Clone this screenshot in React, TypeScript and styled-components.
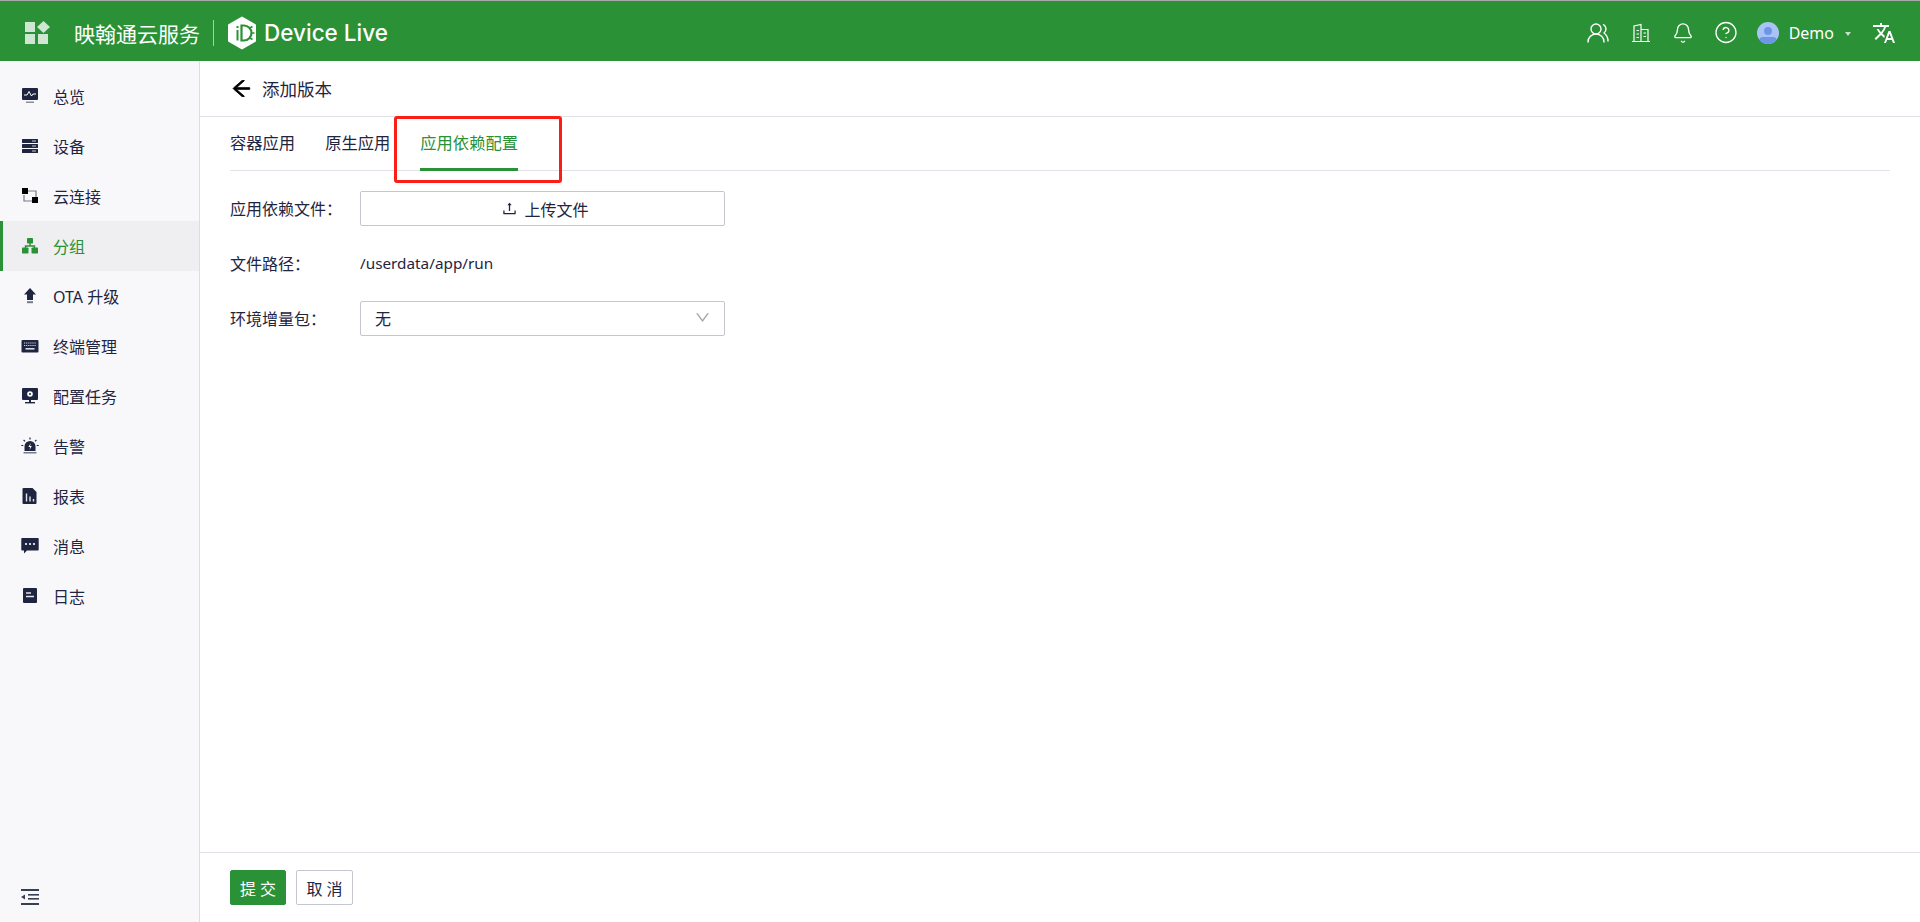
import React from "react";
import styled, { createGlobalStyle } from "styled-components";
import { Bell, CircleHelp, UsersRound } from "lucide-react";
import { AiOutlineArrowLeft, AiOutlineDown, AiOutlineUpload } from "react-icons/ai";
import { MdTranslate } from "react-icons/md";

const GREEN = "#2a9136";
const INK = "#1f2540";
const LINE = "#e0e2ea";

const GlobalStyle = createGlobalStyle`
  html, body {
    margin: 0;
    padding: 0;
    height: 100%;
    overflow: hidden;
  }
  body {
    font-family: "Noto Sans", "Noto Sans CJK SC", sans-serif;
    color: ${INK};
    background: #fff;
  }
`;

const Page = styled.div`
  position: relative;
  display: flex;
  flex-direction: column;
  height: 922px;
`;

const Header = styled.header`
  flex: none;
  box-sizing: border-box;
  height: 61px;
  display: flex;
  align-items: center;
  background: ${GREEN};
  border-top: 1px solid #a9a9a9;
  color: #fff;
  padding: 3px 24px 0 25px;
  z-index: 1;
`;

const AppTitle = styled.span`
  margin-left: 24px;
  font-size: 21px;
  white-space: nowrap;
`;

const Divider = styled.span`
  width: 1px;
  height: 26px;
  margin: 0 13px;
  background: #a8d0ad;
`;

const ProductName = styled.span`
  margin-left: 7px;
  font-family: Inter, sans-serif;
  font-size: 22.5px;
  font-weight: 500;
  white-space: nowrap;
`;

const HeaderRight = styled.div`
  margin-left: auto;
  display: flex;
  align-items: center;
`;

const HeaderIcon = styled.span`
  width: 24px;
  height: 24px;
  display: flex;
  align-items: center;
  justify-content: center;
  margin-right: 18.6px;
`;

const UserName = styled.span`
  margin-left: 10px;
  font-size: 16px;
`;

const Caret = styled.span`
  margin: 2px 21px 0 11px;
  border-style: solid;
  border-width: 4px 3.5px 0;
  border-color: #c8e0cb transparent transparent;
`;

const Body = styled.div`
  flex: 1;
  min-height: 0;
  display: flex;
`;

const Sidebar = styled.aside`
  flex: none;
  box-sizing: border-box;
  width: 200px;
  display: flex;
  flex-direction: column;
  padding-top: 10px;
  background: #f8f8fb;
  border-right: 1px solid #dcdde4;
`;

const NavItem = styled.div<{ $active?: boolean }>`
  height: 50px;
  display: flex;
  align-items: center;
  gap: 14px;
  padding-left: 21px;
  font-size: 16px;
  color: ${(p) => (p.$active ? GREEN : INK)};
  background: ${(p) => (p.$active ? "#efeff1" : "transparent")};
  box-shadow: ${(p) => (p.$active ? `inset 3px 0 0 ${GREEN}` : "none")};
`;

const Collapse = styled.div`
  margin-top: auto;
  padding: 0 0 17px 21px;
  line-height: 0;
`;

const Main = styled.main`
  flex: 1;
  min-width: 0;
  display: flex;
  flex-direction: column;
`;

const TitleBar = styled.div`
  flex: none;
  box-sizing: border-box;
  height: 56px;
  display: flex;
  align-items: center;
  gap: 9px;
  padding-left: 30px;
  border-bottom: 1px solid ${LINE};
  font-size: 17.5px;
`;

const Content = styled.div`
  flex: 1;
  padding: 0 30px;
`;

const Tabs = styled.div`
  height: 54px;
  box-sizing: border-box;
  display: flex;
  gap: 30px;
  border-bottom: 1px solid ${LINE};
`;

const Tab = styled.div<{ $active?: boolean }>`
  height: 54px;
  box-sizing: border-box;
  padding-top: 13px;
  font-size: 16.3px;
  color: ${(p) => (p.$active ? GREEN : INK)};
  border-bottom: 3px solid ${(p) => (p.$active ? GREEN : "transparent")};
`;

const Form = styled.div`
  display: flex;
  flex-direction: column;
  gap: 20px;
  padding-top: 20px;
`;

const Row = styled.div`
  height: 35px;
  display: flex;
  align-items: center;
  font-size: 16px;
`;

const Label = styled.label`
  flex: none;
  width: 130px;
  padding-bottom: 2px;
`;

const Value = styled.span`
  font-size: 15.3px;
  padding-bottom: 2px;
`;

const UploadButton = styled.div`
  box-sizing: border-box;
  width: 365px;
  height: 35px;
  display: flex;
  align-items: center;
  justify-content: center;
  gap: 6px;
  padding-left: 5px;
  border: 1px solid #c4c6d0;
  border-radius: 2px;
`;

const Select = styled.div`
  box-sizing: border-box;
  width: 365px;
  height: 35px;
  display: flex;
  align-items: center;
  justify-content: space-between;
  padding: 0 13px 2px 14px;
  border: 1px solid #c4c6d0;
  border-radius: 2px;
`;

const Footer = styled.div`
  flex: none;
  box-sizing: border-box;
  height: 70px;
  display: flex;
  gap: 10px;
  padding: 17px 30px 0;
  border-top: 1px solid ${LINE};
`;

const Button = styled.button<{ $primary?: boolean }>`
  box-sizing: border-box;
  width: ${(p) => (p.$primary ? 56 : 57)}px;
  height: 35px;
  padding: 0;
  font-family: inherit;
  font-size: 16px;
  border-radius: 2px;
  border: 1px solid ${(p) => (p.$primary ? GREEN : "#c4c6d0")};
  background: ${(p) => (p.$primary ? GREEN : "#fff")};
  color: ${(p) => (p.$primary ? "#fff" : INK)};
`;

// the red box somebody drew over the screenshot
const Annotation = styled.div`
  position: absolute;
  left: 394px;
  top: 116px;
  width: 168px;
  height: 67px;
  box-sizing: border-box;
  border: 3px solid #fa1e16;
  border-radius: 3px;
  pointer-events: none;
`;

const Glyph = ({ children }: { children: React.ReactNode }) => (
  <svg width="18" height="18" viewBox="0 0 18 18" style={{ flex: "none" }}>
    {children}
  </svg>
);

const icons: Record<string, React.ReactNode> = {
  overview: (
    <>
      <rect x="1" y="1" width="16" height="12" rx="1" fill={INK} />
      <polyline points="3,8 6,8 8,4.5 10.5,9 12,7 15,7" fill="none" stroke="#fff" strokeWidth="1" />
      <rect x="5" y="14.5" width="8" height="1.5" fill="#8b8d9c" />
    </>
  ),
  device: (
    <>
      <rect x="1" y="2" width="16" height="4" rx="0.5" fill={INK} />
      <rect x="1" y="7" width="16" height="4" rx="0.5" fill={INK} />
      <rect x="1" y="12" width="16" height="4" rx="0.5" fill={INK} />
      <rect x="11" y="3.5" width="4" height="1" fill="#c8c9d2" />
      <rect x="11" y="8.5" width="4" height="1" fill="#c8c9d2" />
      <rect x="11" y="13.5" width="4" height="1" fill="#c8c9d2" />
    </>
  ),
  cloud: (
    <>
      <path d="M7 4h8v6M11 14H3V8" fill="none" stroke="#77798a" strokeWidth="1.2" />
      <rect x="1" y="1" width="6" height="6" fill="#000" />
      <rect x="11" y="10" width="6" height="6" fill="#000" />
    </>
  ),
  group: (
    <>
      <path d="M9 6v3M4.5 11V9h9v2" fill="none" stroke={GREEN} strokeWidth="1.4" />
      <rect x="6" y="1" width="6" height="5.5" rx="0.8" fill={GREEN} />
      <rect x="1" y="10.5" width="6.5" height="6" rx="0.8" fill={GREEN} />
      <rect x="10.5" y="10.5" width="6.5" height="6" rx="0.8" fill={GREEN} />
    </>
  ),
  ota: (
    <>
      <polygon points="9,1 15,7.5 12,7.5 12,13 6,13 6,7.5 3,7.5" fill={INK} />
      <rect x="6" y="14.2" width="6" height="2" fill="#77798a" />
    </>
  ),
  terminal: (
    <>
      <rect x="0.5" y="3" width="17" height="12.5" rx="1" fill={INK} />
      <path d="M3 6h12M3 8.5h12" stroke="#d9dae0" strokeWidth="1.2" strokeDasharray="1.2 .9" />
      <rect x="4.5" y="11" width="9" height="1.6" fill="#d9dae0" />
    </>
  ),
  config: (
    <>
      <rect x="1" y="1" width="16" height="12" rx="1" fill={INK} />
      <circle cx="9" cy="7" r="2.8" fill="#fff" />
      <circle cx="9" cy="7" r="1" fill={INK} />
      <rect x="8" y="13" width="2" height="2" fill={INK} />
      <rect x="4" y="15" width="10" height="1.4" fill={INK} />
    </>
  ),
  alarm: (
    <>
      <path d="M3.5 14V9.5a5.5 5.5 0 0 1 11 0V14z" fill={INK} />
      <path d="M9.8 6 7.4 10h1.8l-.7 3 2.3-4H9z" fill="#fff" />
      <rect x="2.5" y="15" width="13" height="1.5" fill="#77798a" />
      <path d="M9 .5v2M2.6 3l1.4 1.4M15.4 3 14 4.4M.3 8.5h2M15.7 8.5h2" stroke={INK} strokeWidth="1.2" />
    </>
  ),
  report: (
    <>
      <path d="M2.5 1h9l4 4v11a1 1 0 0 1-1 1h-12a1 1 0 0 1-1-1V2a1 1 0 0 1 1-1z" fill={INK} />
      <path d="M5.5 6.5v8M9 9.5v5M12.5 12v2.5" stroke="#e3e4ea" strokeWidth="1.4" />
    </>
  ),
  message: (
    <>
      <path d="M1 1h16a.7.7 0 0 1 .7.7v11a.7.7 0 0 1-.7.7H6l-3 3v-3H1a.7.7 0 0 1-.7-.7v-11A.7.7 0 0 1 1 1z" fill={INK} />
      <circle cx="5" cy="7" r="1.1" fill="#fff" />
      <circle cx="9" cy="7" r="1.1" fill="#fff" />
      <circle cx="13" cy="7" r="1.1" fill="#fff" />
    </>
  ),
  log: (
    <>
      <rect x="2" y="1" width="14" height="15" rx="1" fill={INK} />
      <path d="M5 6h5M5 9.5h8" stroke="#e3e4ea" strokeWidth="1.5" />
    </>
  ),
};

const navItems = [
  { key: "overview", label: "总览" },
  { key: "device", label: "设备" },
  { key: "cloud", label: "云连接" },
  { key: "group", label: "分组", active: true },
  { key: "ota", label: "OTA 升级" },
  { key: "terminal", label: "终端管理" },
  { key: "config", label: "配置任务" },
  { key: "alarm", label: "告警" },
  { key: "report", label: "报表" },
  { key: "message", label: "消息" },
  { key: "log", label: "日志" },
];

const AppsLogo = () => (
  <svg width="25" height="24" viewBox="0 0 25 24" fill="#cfe6d2">
    <rect x="0" y="1" width="10" height="10" />
    <polygon points="18.5,0 25,6 18.5,12 12,6" />
    <rect x="0" y="13" width="10" height="10" />
    <rect x="13" y="13" width="10" height="10" />
  </svg>
);

const ProductLogo = () => (
  <svg width="30" height="34" viewBox="0 0 30 34">
    <path d="M15 1.5 28 9v16L15 32.5 2 25V9z" fill="#fff" stroke="#fff" strokeWidth="2" strokeLinejoin="round" />
    <path d="M14.5 9.5H17a7.5 7.5 0 0 1 0 15h-2.5z" fill="none" stroke={GREEN} strokeWidth="2.2" />
    <path d="M23 12l2.5-1.5M24.5 17h3M23 22l2.5 1.5" stroke={GREEN} strokeWidth="1.6" />
    <rect x="9.5" y="14" width="2" height="10.5" fill={GREEN} />
    <rect x="9.5" y="10" width="2" height="2" fill={GREEN} />
  </svg>
);

const BuildingIcon = () => (
  <svg width="20" height="20" viewBox="0 0 20 20" fill="none" stroke="#fff" strokeWidth="1.2">
    <path d="M1 18.5h18M3 18.5V3l7-1.5v17M10 6.5h7v12" />
    <path d="M5.5 7.5h2.5M5.5 11h2.5M5.5 14.5h2.5M12.5 10h2.5M12.5 13.5h2.5" />
  </svg>
);

const Avatar = () => (
  <svg width="22" height="22" viewBox="0 0 22 22">
    <defs>
      <clipPath id="avatar-clip">
        <circle cx="11" cy="11" r="11" />
      </clipPath>
    </defs>
    <g clipPath="url(#avatar-clip)">
      <rect width="22" height="22" fill="#a9c3f5" />
      <circle cx="11" cy="9" r="4" fill="#6d96e8" />
      <rect x="2" y="15" width="18" height="8" rx="4" fill="#6d96e8" />
    </g>
  </svg>
);

const App = () => {
  return (
    <Page>
      <GlobalStyle />
      <Header>
        <AppsLogo />
        <AppTitle>映翰通云服务</AppTitle>
        <Divider />
        <ProductLogo />
        <ProductName>Device Live</ProductName>
        <HeaderRight>
          <HeaderIcon>
            <UsersRound size={24} strokeWidth={1.4} />
          </HeaderIcon>
          <HeaderIcon>
            <BuildingIcon />
          </HeaderIcon>
          <HeaderIcon>
            <Bell size={22} strokeWidth={1.5} />
          </HeaderIcon>
          <HeaderIcon>
            <CircleHelp size={25} strokeWidth={1.3} />
          </HeaderIcon>
          <Avatar />
          <UserName>Demo</UserName>
          <Caret />
          <MdTranslate size={24} />
        </HeaderRight>
      </Header>
      <Body>
        <Sidebar>
          {navItems.map((item) => (
            <NavItem key={item.key} $active={item.active}>
              <Glyph>{icons[item.key]}</Glyph>
              {item.label}
            </NavItem>
          ))}
          <Collapse>
            <svg width="18" height="16" viewBox="0 0 18 16" fill="#3a3e55">
              <rect x="0" y="0" width="18" height="2" />
              <rect x="7" y="5" width="11" height="1.6" />
              <rect x="7" y="9" width="11" height="1.6" />
              <rect x="0" y="14" width="18" height="2" />
              <polygon points="0,8 4,5.5 4,10.5" />
            </svg>
          </Collapse>
        </Sidebar>
        <Main>
          <TitleBar>
            <AiOutlineArrowLeft size={23} color="#000" stroke="#000" strokeWidth={40} />
            添加版本
          </TitleBar>
          <Content>
            <Tabs>
              <Tab>容器应用</Tab>
              <Tab>原生应用</Tab>
              <Tab $active>应用依赖配置</Tab>
            </Tabs>
            <Form>
              <Row>
                <Label>应用依赖文件：</Label>
                <UploadButton>
                  <AiOutlineUpload size={17} />
                  上传文件
                </UploadButton>
              </Row>
              <Row>
                <Label>文件路径：</Label>
                <Value>/userdata/app/run</Value>
              </Row>
              <Row>
                <Label>环境增量包：</Label>
                <Select>
                  无
                  <AiOutlineDown size={17} color="#a4a7b3" />
                </Select>
              </Row>
            </Form>
          </Content>
          <Footer>
            <Button $primary>提 交</Button>
            <Button>取 消</Button>
          </Footer>
        </Main>
      </Body>
      <Annotation />
    </Page>
  );
};

export default App;
